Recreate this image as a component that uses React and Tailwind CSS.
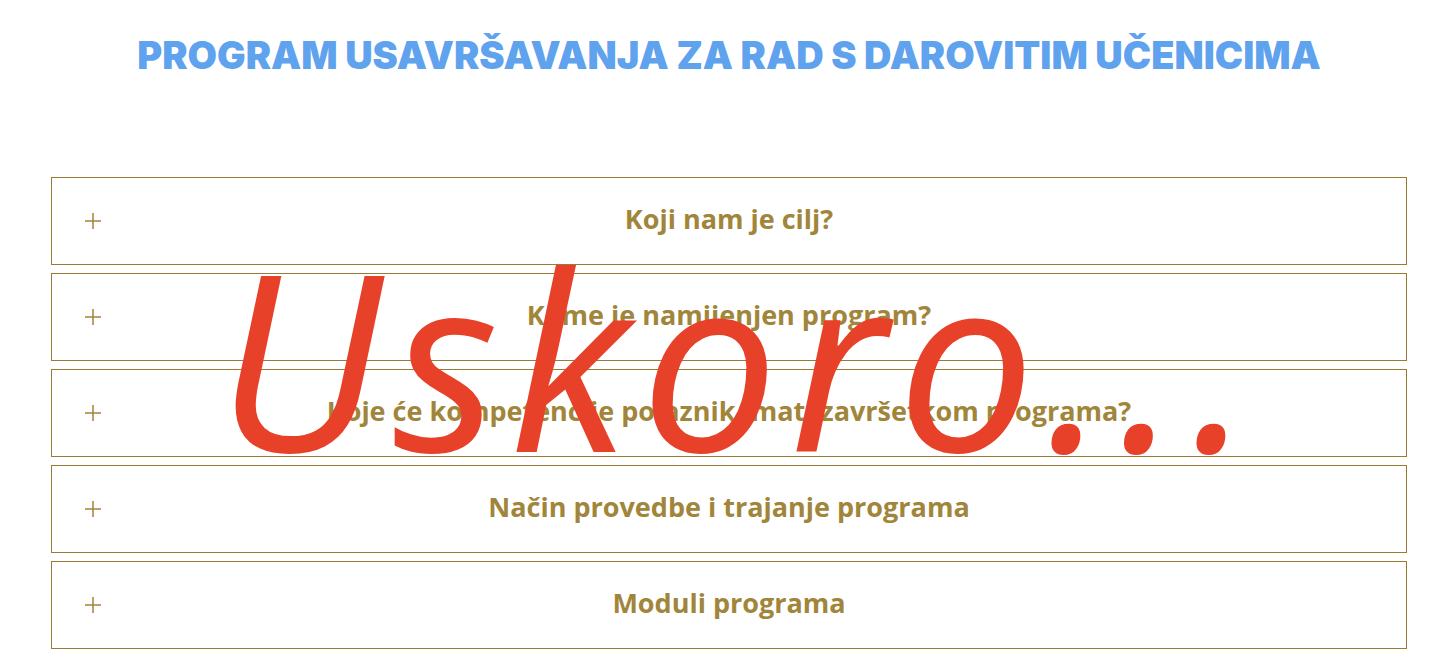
import React from "react";

const items = [
  "Koji nam je cilj?",
  "Kome je namijenjen program?",
  "Koje će kompetencije polaznik imati završetkom programa?",
  "Način provedbe i trajanje programa",
  "Moduli programa",
];

function Plus() {
  return (
    <svg width="18" height="18" viewBox="0 0 18 18" className="shrink-0">
      <path d="M9 1v16M1 9h16" stroke="#a0853a" strokeWidth="1.5" fill="none" />
    </svg>
  );
}

export default function App() {
  return (
    <div className="relative w-[1436px] h-[670px] bg-white overflow-hidden pl-[51px] pr-[29px]">
      <h1
        className="pt-[32px] text-center text-[38px] leading-[46px] font-black text-[#5fa2ee]"
        style={{ fontFamily: "Inter, 'Liberation Sans', sans-serif" }}
      >
        PROGRAM USAVRŠAVANJA ZA RAD S DAROVITIM UČENICIMA
      </h1>
      <div className="mt-[99px] flex flex-col gap-[8px]">
        {items.map((t) => (
          <div
            key={t}
            className="h-[88px] border border-[#9a7a35] flex items-center pl-[32px] pr-[50px]"
          >
            <Plus />
            <div
              className="flex-1 text-center text-[27px] font-bold text-[#a0853a] pb-[4px]"
              style={{ fontFamily: "'Open Sans', 'Liberation Sans', sans-serif" }}
            >
              {t}
            </div>
          </div>
        ))}
      </div>
      <div
        className="absolute left-[216px] top-[235px] text-[#e8412a] italic text-[245px] leading-[245px] font-medium tracking-[11px]"
        style={{ fontFamily: "'Open Sans', 'Liberation Sans', sans-serif" }}
      >
        Uskoro...
      </div>
    </div>
  );
}
